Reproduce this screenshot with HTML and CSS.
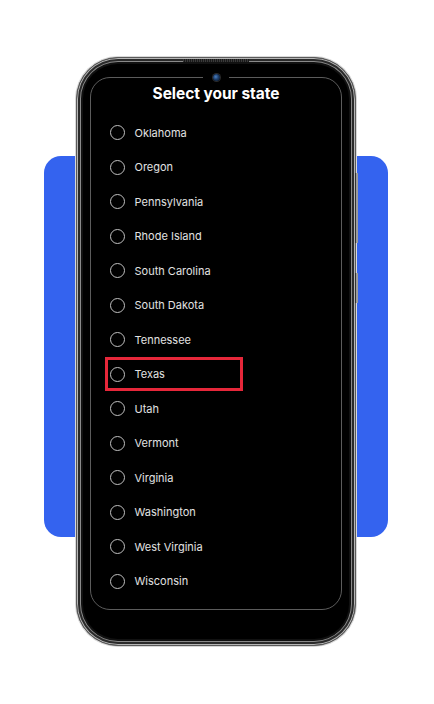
FILE: index.html
```html
<!DOCTYPE html>
<html>
<head>
<meta charset="utf-8">
<link rel="stylesheet" href="styles.css">
</head>
<body>
<div class="stage">
  <div class="backdrop"></div>
  <div class="phone">
    <div class="speaker"></div>
    <div class="btn btn-vol"></div>
    <div class="btn btn-power"></div>
    <div class="screen">
      <div class="camera"></div>
      <h1 class="title">Select your state</h1>
      <ul class="list">
        <li class="row"><span class="radio"></span><span class="label">Oklahoma</span></li>
        <li class="row"><span class="radio"></span><span class="label">Oregon</span></li>
        <li class="row"><span class="radio"></span><span class="label">Pennsylvania</span></li>
        <li class="row"><span class="radio"></span><span class="label">Rhode Island</span></li>
        <li class="row"><span class="radio"></span><span class="label">South Carolina</span></li>
        <li class="row"><span class="radio"></span><span class="label">South Dakota</span></li>
        <li class="row"><span class="radio"></span><span class="label">Tennessee</span></li>
        <li class="row row-highlight"><span class="radio"></span><span class="label">Texas</span><span class="highlight"></span></li>
        <li class="row"><span class="radio"></span><span class="label">Utah</span></li>
        <li class="row"><span class="radio"></span><span class="label">Vermont</span></li>
        <li class="row"><span class="radio"></span><span class="label">Virginia</span></li>
        <li class="row"><span class="radio"></span><span class="label">Washington</span></li>
        <li class="row"><span class="radio"></span><span class="label">West Virginia</span></li>
        <li class="row"><span class="radio"></span><span class="label">Wisconsin</span></li>
      </ul>
    </div>
  </div>
</div>
</body>
</html>
```
FILE: styles.css
```css
html, body {
  margin: 0;
  padding: 0;
  background: #ffffff;
}
.stage {
  display: grid;
  width: 434px;
  height: 704px;
  overflow: hidden;
}
.backdrop {
  grid-area: 1 / 1;
  align-self: start;
  justify-self: start;
  margin: 156px 0 0 44px;
  width: 344px;
  height: 381px;
  border-radius: 17px;
  background: #3463ef;
}
.phone {
  grid-area: 1 / 1;
  align-self: start;
  justify-self: start;
  position: relative;
  box-sizing: border-box;
  margin: 57px 0 0 76px;
  width: 280px;
  height: 589px;
  border-radius: 42px;
  background: #000;
  border: 1px solid #5a5a5a;
  box-shadow:
    inset 0 0 0 1px #b5b5b5,
    inset 0 0 0 3px #2a2a2a,
    inset 0 0 0 4px #8a8a8a,
    inset 0 0 0 6px #111,
    0 0 0 1px #d8d8d8;
  padding: 19px 13px 0 13px;
}
.speaker {
  position: absolute;
  top: 1px;
  left: 106px;
  width: 66px;
  height: 3px;
  background: repeating-linear-gradient(90deg, #3a3a3a 0 1px, #1a1a1a 1px 2px);
}
.btn {
  position: absolute;
  right: -3px;
  width: 2px;
  background: #9a9a9a;
  border-left: 1px solid #333;
}
.btn-vol {
  top: 115px;
  height: 70px;
}
.btn-power {
  top: 215px;
  height: 30px;
}
.screen {
  position: relative;
  box-sizing: border-box;
  height: 533px;
  border: 1px solid #5c5c5c;
  border-radius: 20px;
  background: #000;
  padding: 6px 0 0 19px;
}
.camera {
  position: absolute;
  top: -6px;
  left: 50%;
  margin-left: -13px;
  width: 26px;
  height: 10px;
  background: #000;
  display: flex;
  justify-content: center;
  align-items: center;
}
.camera::after {
  content: "";
  width: 7px;
  height: 7px;
  border-radius: 50%;
  background: radial-gradient(circle at 40% 40%, #4a7fc0 0, #1e3e6a 45%, #0b1626 100%);
  box-shadow: 0 0 0 1px #2a2a2a;
}
.title {
  margin: 0 0 11.5px -19px;
  text-align: center;
  font-family: Inter, "Liberation Sans", sans-serif;
  font-weight: 700;
  font-size: 15.5px;
  line-height: 20px;
  color: #ffffff;
  letter-spacing: -0.05px;
}
.list {
  list-style: none;
  margin: 0;
  padding: 0;
}
.row {
  position: relative;
  display: flex;
  align-items: center;
  height: 34.5px;
}
.radio {
  box-sizing: border-box;
  width: 15px;
  height: 15px;
  border-radius: 50%;
  border: 1.6px solid #c0c0c0;
  flex: none;
}
.label {
  margin-left: 9.5px;
  font-family: Inter, "Liberation Sans", sans-serif;
  font-size: 11px;
  color: #e2e2e2;
}
.highlight {
  position: absolute;
  left: -5px;
  top: 0;
  width: 138px;
  height: 34px;
  box-sizing: border-box;
  border: 3.5px solid #e6273a;
}
```
